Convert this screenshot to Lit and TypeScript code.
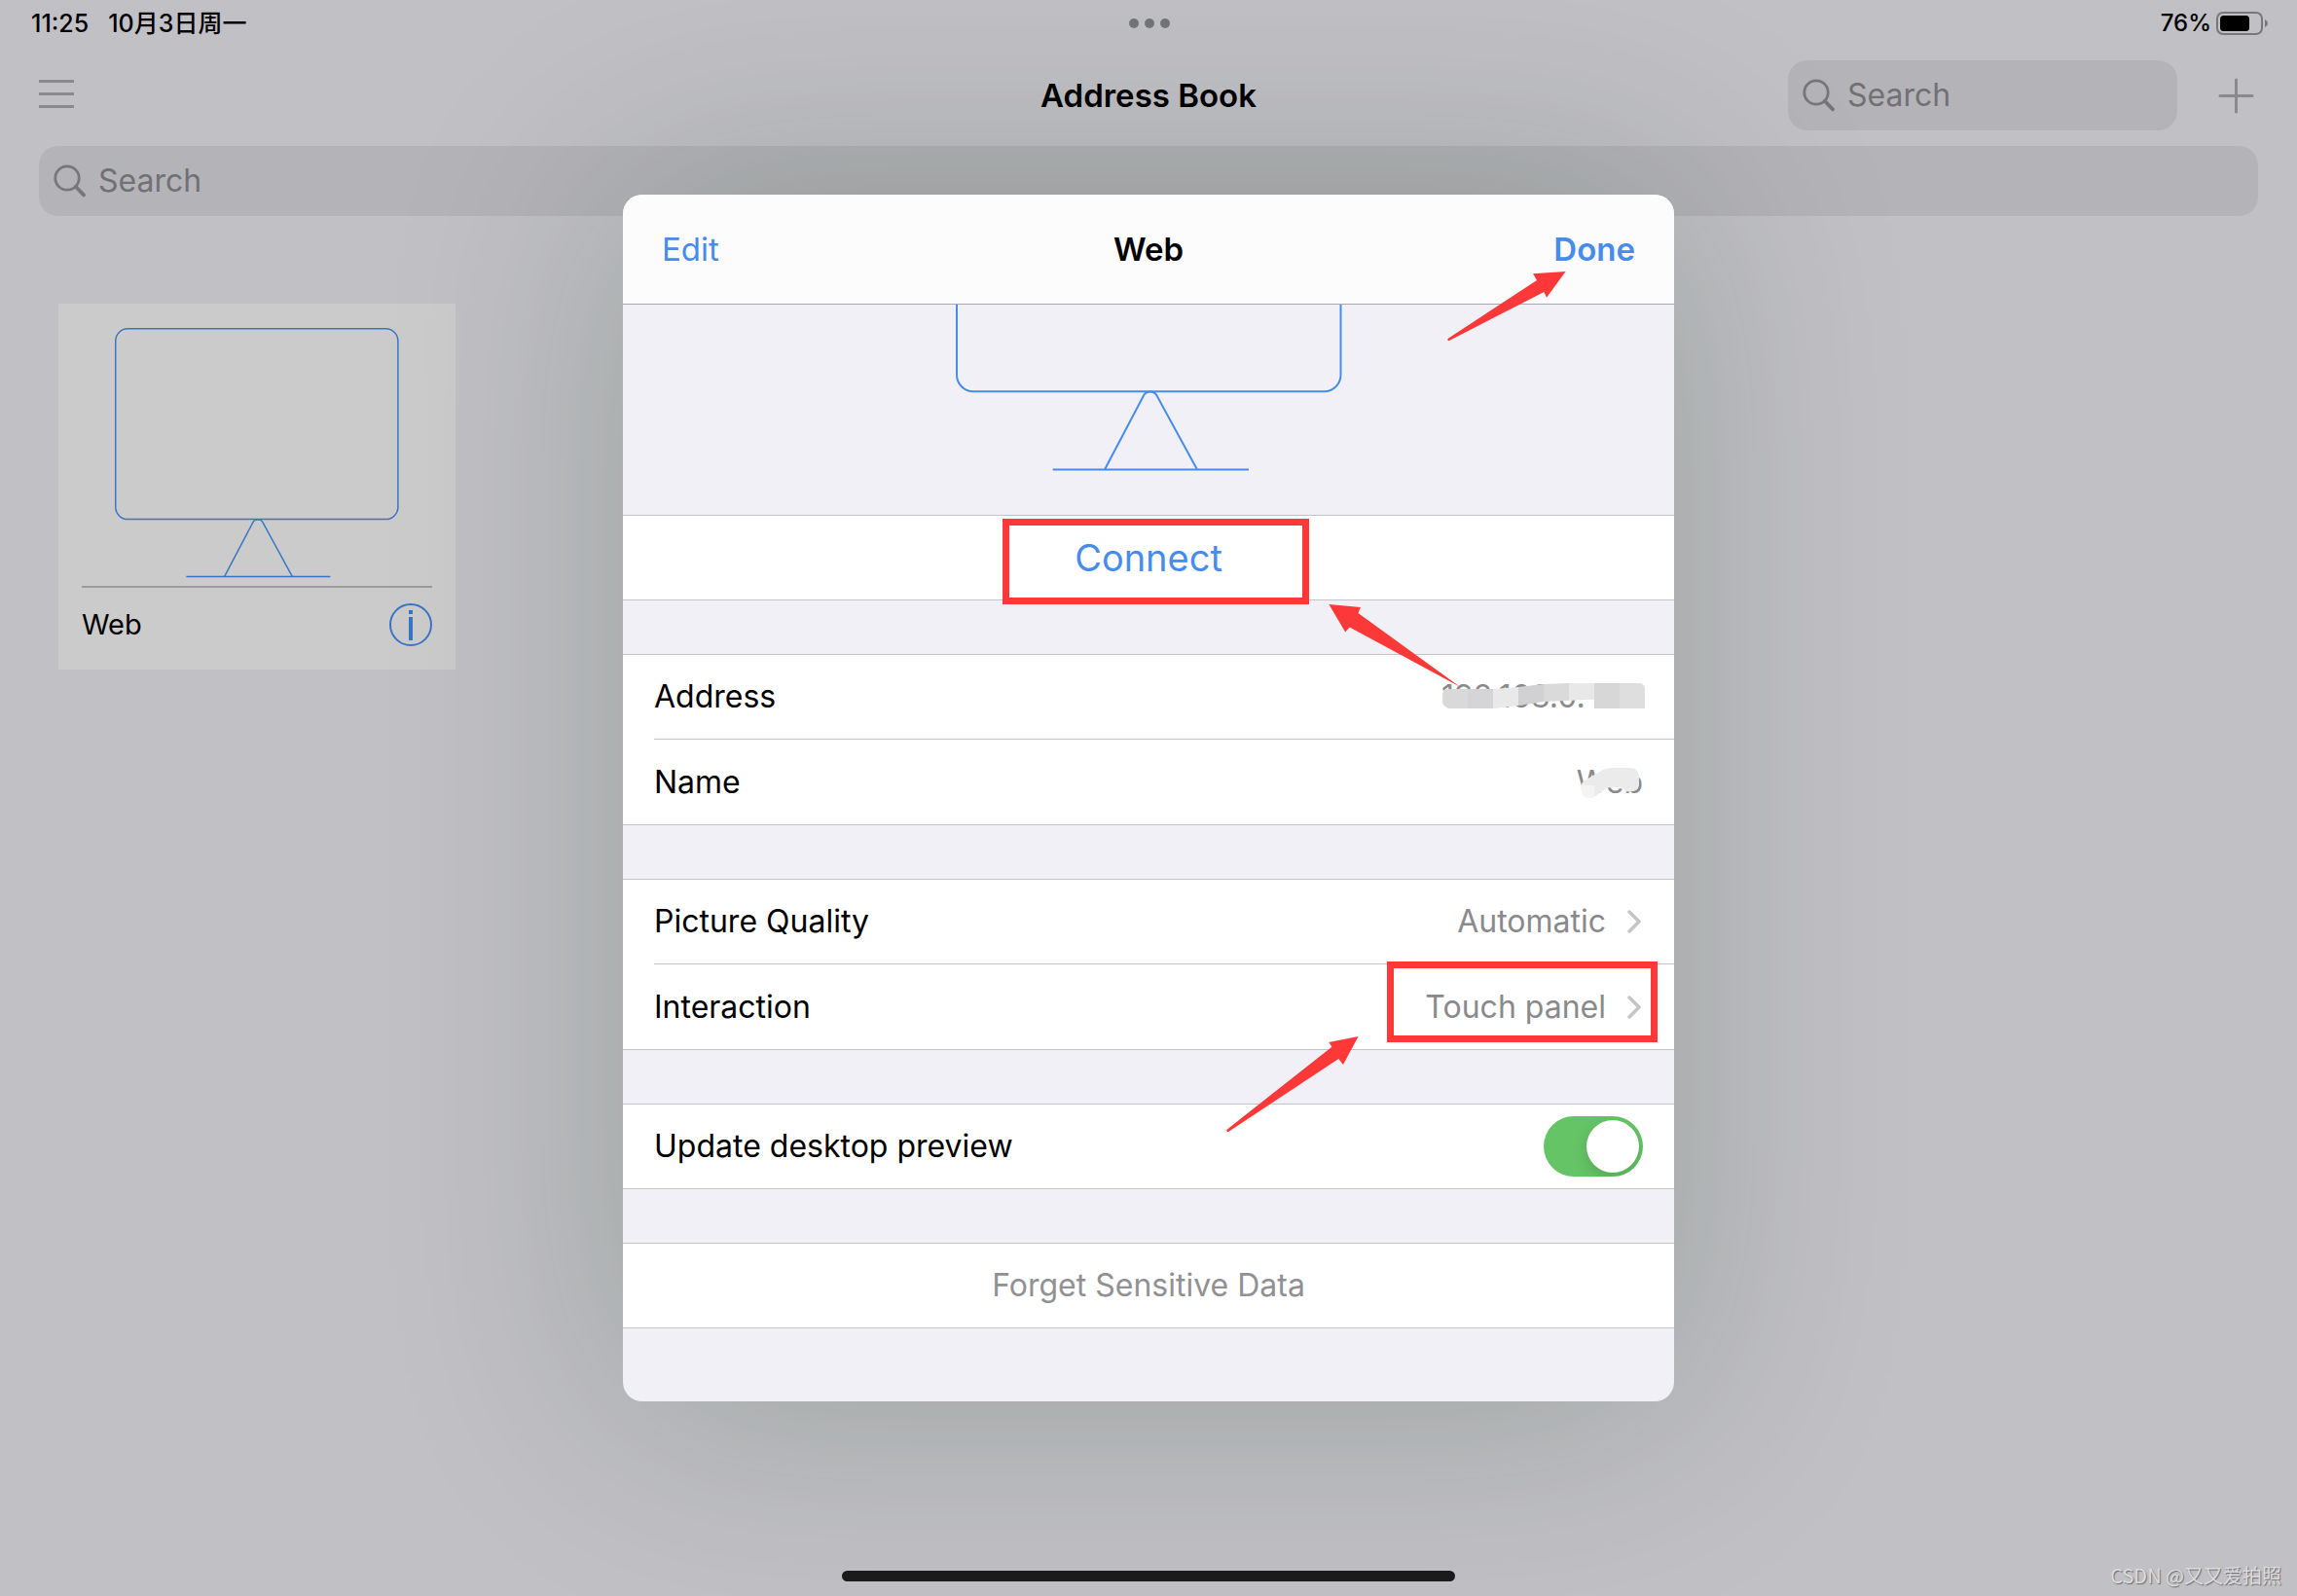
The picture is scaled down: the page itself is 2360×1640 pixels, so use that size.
import { LitElement, html, css, svg } from "lit";
import { customElement, property, state } from "lit/decorators.js";

/** Outline of a desktop monitor on a stand; takes its colour from the text colour. */
@customElement("monitor-glyph")
class MonitorGlyph extends LitElement {
  static styles = css`
    :host {
      display: block;
      flex: none;
    }
    .glyph {
      display: block;
      width: 100%;
      height: auto;
    }
  `;

  render() {
    return html`
      <svg class="glyph" viewBox="0 0 397 349" fill="none" stroke="currentColor" stroke-width="2" aria-hidden="true">
        <rect x="1" y="1" width="394.5" height="266.3" rx="17" />
        <path d="M153 347.5 193.5 270.5Q195.5 267.5 199.7 267.5T206 270.5L248 347.5" />
        <path d="M99.7 347.5H301" />
      </svg>
    `;
  }
}

/** Rounded search box with a magnifier in front. */
@customElement("search-field")
class SearchField extends LitElement {
  @property() label = "Search";

  static styles = css`
    :host {
      display: block;
    }
    .field {
      display: flex;
      align-items: center;
      gap: 12px;
      height: 72px;
      box-sizing: border-box;
      padding: 0 15px;
      border-radius: 20px;
      background: #b4b3b8;
    }
    .lens {
      flex: none;
      width: 34px;
      height: 34px;
      color: #77777a;
    }
    .input {
      flex: 1;
      min-width: 0;
      padding: 0;
      border: 0;
      outline: 0;
      background: none;
      color: #000;
      font: 400 32px/40px Inter, "Noto Sans CJK SC", sans-serif;
    }
    .input::placeholder {
      color: #717175;
      opacity: 1;
    }
  `;

  render() {
    return html`
      <label class="field">
        <svg class="lens" viewBox="0 0 34 34" fill="none" stroke="currentColor" stroke-linecap="round" aria-hidden="true">
          <circle cx="14" cy="14" r="12.2" stroke-width="2.8" />
          <path d="M22.8 22.8 31 31.4" stroke-width="3.8" />
        </svg>
        <input class="input" type="search" placeholder=${this.label} aria-label=${this.label} />
      </label>
    `;
  }
}

const chevron = svg`<path d="M2 2 12 12 2 22" />`;

@customElement("app-root")
class AppRoot extends LitElement {
  @state() private preview = true;

  static styles = css`
    :host {
      display: block;
      font-family: Inter, "Noto Sans CJK SC", sans-serif;
      font-size: 32px;
      line-height: 40px;
      color: #000;
    }
    button {
      margin: 0;
      padding: 0;
      border: 0;
      background: none;
      color: inherit;
      font: inherit;
      cursor: pointer;
    }
    svg {
      display: block;
      flex: none;
    }

    .screen {
      position: relative;
      display: flex;
      flex-direction: column;
      min-height: 100vh;
      overflow: hidden;
      background: #c1c0c5;
    }

    /* status bar */
    .status {
      display: grid;
      grid-template-columns: 1fr auto 1fr;
      align-items: center;
      height: 48px;
      padding: 0 30px 0 32px;
      font-size: 24px;
      line-height: 32px;
      font-weight: 500;
    }
    .clock {
      display: flex;
      gap: 20px;
      font-size: 25px;
    }
    .dots {
      display: flex;
      gap: 6px;
    }
    .dot {
      width: 10px;
      height: 10px;
      border-radius: 50%;
      background: #747578;
    }
    .power {
      display: flex;
      align-items: center;
      justify-content: flex-end;
      gap: 5px;
    }

    /* navigation bar */
    .nav {
      display: grid;
      grid-template-columns: 1fr auto 1fr;
      align-items: center;
      height: 102px;
      box-sizing: border-box;
      padding: 0 40px 2px;
      color: #8a8a8d;
    }
    .title {
      margin: 0;
      font-size: 33px;
      font-weight: 600;
      color: #000;
    }
    .menu {
      justify-self: start;
    }
    .tools {
      display: flex;
      justify-content: flex-end;
      align-items: center;
      gap: 39px;
    }
    .tool-search {
      width: 400px;
    }

    .main {
      flex: 1;
      padding: 0 40px;
    }
    .cards {
      display: flex;
      flex-wrap: wrap;
      gap: 40px;
      padding: 90px 20px;
    }
    .card {
      width: 408px;
      box-sizing: border-box;
      padding: 25px 24px 24px;
      background: #cbcbcb;
    }
    .card-picture {
      width: 292px;
      margin: 0 auto;
      color: #3a75c5;
    }
    .card-foot {
      display: flex;
      align-items: center;
      justify-content: space-between;
      margin-top: 8px;
      padding-top: 16px;
      border-top: 2px solid #9c9c9c;
      font-size: 29px;
    }
    .info {
      color: #3a75c5;
    }

    /* sheet */
    .overlay {
      position: absolute;
      inset: 0;
      display: grid;
      place-items: center;
      grid-template-columns: minmax(0, 1080px);
      justify-content: center;
    }
    .sheet {
      position: relative;
      width: 100%;
      border-radius: 20px;
      background: #f1f0f6;
      box-shadow: 0 0 240px rgba(8, 36, 0, 0.21);
    }
    .sheet-head {
      display: grid;
      grid-template-columns: 1fr auto 1fr;
      align-items: center;
      height: 113px;
      box-sizing: border-box;
      padding: 0 40px;
      border-bottom: 1px solid #a9a9ad;
      border-radius: 20px 20px 0 0;
      background: #fcfcfd;
      font-size: 33px;
    }
    .link {
      color: #478cec;
    }
    .edit {
      justify-self: start;
    }
    .done {
      justify-self: end;
      font-weight: 600;
    }
    .preview {
      display: flex;
      flex-direction: column;
      justify-content: flex-end;
      align-items: center;
      height: 216px;
      box-sizing: border-box;
      padding-bottom: 45px;
      overflow: hidden;
      color: #478cec;
    }
    .preview-picture {
      width: 397px;
    }
    .groups {
      display: flex;
      flex-direction: column;
      gap: 55px;
      padding-bottom: 75px;
    }
    .group {
      display: flex;
      flex-direction: column;
      padding-left: 32px;
      border: solid #c4c4c7;
      border-width: 1px 0;
      background: #fff;
    }
    .group.centered {
      padding-left: 0;
    }
    .row {
      display: flex;
      align-items: center;
      height: 86px;
      box-sizing: border-box;
      padding-right: 32px;
      text-align: left;
    }
    .row + .row {
      height: 88px;
      border-top: 1px solid #c4c4c7;
    }
    .row-label {
      flex: 1;
    }
    .value {
      color: #8a8a8d;
    }
    .chevron {
      margin: 0 2px 0 22px;
      color: #c5c5c8;
    }
    .action {
      height: 86px;
      text-align: center;
    }
    .connect {
      font-size: 38px;
      line-height: 48px;
    }
    .forget {
      color: #919194;
    }
    .masked {
      position: relative;
      color: #8a8a8d;
    }
    .address {
      width: 209px;
      margin-right: -2px;
    }
    .mosaic {
      position: absolute;
      right: 0;
      top: 4px;
    }
    .toggle {
      appearance: none;
      box-sizing: border-box;
      width: 102px;
      height: 62px;
      margin: 0;
      padding: 4px;
      border-radius: 31px;
      background: #d8d8dc;
      overflow: hidden;
      cursor: pointer;
    }
    .toggle::before {
      content: "";
      display: block;
      width: 54px;
      height: 54px;
      border-radius: 50%;
      background: #fff;
      box-shadow: 0 6px 16px rgba(0, 0, 0, 0.15);
    }
    .toggle:checked {
      background: #65c466;
    }
    .toggle:checked::before {
      margin-left: auto;
    }

    /* marks drawn over the sheet */
    .marks {
      position: absolute;
      inset: 0;
      pointer-events: none;
    }

    .home-bar {
      align-self: center;
      width: 630px;
      height: 11px;
      margin-bottom: 15px;
      border-radius: 6px;
      background: #1c1c1c;
    }
    .watermark {
      position: absolute;
      right: 16px;
      bottom: 7px;
      font: 400 20px/28px "Noto Sans CJK SC", sans-serif;
      color: #dcdcde;
      text-shadow: 1px 1px 1px #6b6b6e;
    }
  `;

  private onToggle(e: Event) {
    this.preview = (e.target as HTMLInputElement).checked;
  }

  private linkRow(label: string, value: string) {
    return html`
      <button class="row" type="button">
        <span class="row-label">${label}</span>
        <span class="value">${value}</span>
        <svg class="chevron" width="14" height="24" viewBox="0 0 14 24" fill="none" stroke="currentColor" stroke-width="3.4" stroke-linecap="round" stroke-linejoin="round" aria-hidden="true">${chevron}</svg>
      </button>
    `;
  }

  render() {
    return html`
      <div class="screen">
        <div class="status">
          <div class="clock"><span>11:25</span><span>10月3日周一</span></div>
          <div class="dots"><i class="dot"></i><i class="dot"></i><i class="dot"></i></div>
          <div class="power">
            <span>76%</span>
            <svg width="53" height="24" viewBox="0 0 53 24" aria-hidden="true">
              <rect x="1" y="1" width="46" height="22" rx="6" fill="none" stroke="#78787b" stroke-width="2" />
              <rect x="4" y="4" width="30" height="16" rx="3.5" />
              <path d="M50 8Q53 9.500 53 12T50 16Z" fill="#78787b" />
            </svg>
          </div>
        </div>

        <header class="nav">
          <button class="menu" type="button" aria-label="Menu">
            <svg width="36" height="32" viewBox="0 0 36 32" stroke="currentColor" stroke-width="3" aria-hidden="true">
              <path d="M0 1.500H36M0 14.500H36M0 27.500H36" />
            </svg>
          </button>
          <h1 class="title">Address Book</h1>
          <div class="tools">
            <search-field class="tool-search"></search-field>
            <button type="button" aria-label="Add">
              <svg width="44" height="44" viewBox="0 0 44 44" stroke="currentColor" stroke-width="3" stroke-linecap="round" aria-hidden="true">
                <path d="M21.500 6V39M5 22.500H38" />
              </svg>
            </button>
          </div>
        </header>

        <main class="main">
          <search-field></search-field>
          <div class="cards">
            <article class="card">
              <monitor-glyph class="card-picture"></monitor-glyph>
              <div class="card-foot">
                <span>Web</span>
                <button class="info" type="button" aria-label="Details">
                  <svg width="44" height="44" viewBox="0 0 44 44" aria-hidden="true">
                    <circle cx="22" cy="22" r="21" fill="none" stroke="currentColor" stroke-width="2" />
                    <path d="M20 7h4v4h-4zM20 14h4v24h-4z" fill="currentColor" />
                  </svg>
                </button>
              </div>
            </article>
          </div>
        </main>
        <div class="home-bar"></div>

        <div class="overlay">
          <section class="sheet" role="dialog" aria-labelledby="sheet-title">
            <header class="sheet-head">
              <button class="link edit" type="button">Edit</button>
              <h2 class="title" id="sheet-title">Web</h2>
              <button class="link done" type="button">Done</button>
            </header>
            <div class="preview"><monitor-glyph class="preview-picture"></monitor-glyph></div>
            <div class="groups">
              <div class="group centered">
                <button class="action link connect" type="button">Connect</button>
              </div>
              <div class="group">
                <div class="row">
                  <span class="row-label">Address</span>
                  <span class="masked address">192.168.0.
                    <svg class="mosaic" width="209" height="32" viewBox="0 0 209 32" aria-hidden="true">
                      <clipPath id="address-mask">
                        <path d="M1 14Q1 8 7 8H53L79 6 105 3 130 2H204Q209 3 209 8V28H157V19H150L105 21 79 25 55 28H8Q3 27 1 22Z" />
                      </clipPath>
                      <g clip-path="url(#address-mask)">
                        <path fill="#d9d9d9" d="M1 0h26v32H1z" />
                        <path fill="#d5d5d7" d="M27 0h26v32H27z" />
                        <path fill="#e9e9e9" d="M53 0h26v32H53z" />
                        <path fill="#d1d1d3" d="M79 0h26v32H79z" />
                        <path fill="#dadada" d="M105 0h26v32h-26z" />
                        <path fill="#e8e8e8" d="M131 0h26v32h-26z" />
                        <path fill="#d7d7d7" d="M157 0h26v32h-26z" />
                        <path fill="#dedede" d="M183 0h26v32h-26z" />
                      </g>
                    </svg>
                  </span>
                </div>
                <div class="row">
                  <span class="row-label">Name</span>
                  <span class="masked">Web
                    <svg class="mosaic" width="68" height="33" viewBox="0 0 68 33" aria-hidden="true">
                      <clipPath id="name-mask">
                        <path d="M4.700 23Q3 17 9 13.500L18.300 8 27 3Q32 1 38.300 1H55Q63 1 64 10V19Q62 25 55 25.500 49 26 47 22 44 20 40 21L32 21.500 26.700 24.700 18.300 30.700Q13 33 8 30.500 5 28 4.700 23Z" />
                      </clipPath>
                      <g clip-path="url(#name-mask)">
                        <path fill="#ebebeb" d="M0 0h68v33H0z" />
                        <path fill="#f4f4f4" d="M0 19h18.300v14H0z" />
                      </g>
                    </svg>
                  </span>
                </div>
              </div>
              <div class="group">
                ${this.linkRow("Picture Quality", "Automatic")}
                ${this.linkRow("Interaction", "Touch panel")}
              </div>
              <div class="group">
                <label class="row">
                  <span class="row-label">Update desktop preview</span>
                  <input class="toggle" type="checkbox" role="switch" .checked=${this.preview} @change=${this.onToggle} />
                </label>
              </div>
              <div class="group centered">
                <button class="action forget" type="button">Forget Sensitive Data</button>
              </div>
            </div>
            <svg class="marks" width="100%" height="100%" viewBox="0 0 1080 1240" fill="#fc3938" aria-hidden="true">
              <g fill="none" stroke="#fc3938" stroke-width="7">
                <rect x="393.500" y="336.500" width="308" height="81" />
                <rect x="788.500" y="791.500" width="271" height="76" />
              </g>
              <path d="M968.600 79 935 81.300 939 88 847.500 148Q847 150.500 849 150L946.400 100 949 105.700Z" />
              <path d="M725.400 421 757.900 424 755.400 430 860 505.700 746.600 444.500 742.200 449.500Z" />
              <path d="M755.600 865 725.300 871 728.400 875.700 620.300 961Q620 963.500 622 963L735.300 888 740 894Z" />
            </svg>
          </section>
        </div>

        <div class="watermark">CSDN @又又爱拍照</div>
      </div>
    `;
  }
}
